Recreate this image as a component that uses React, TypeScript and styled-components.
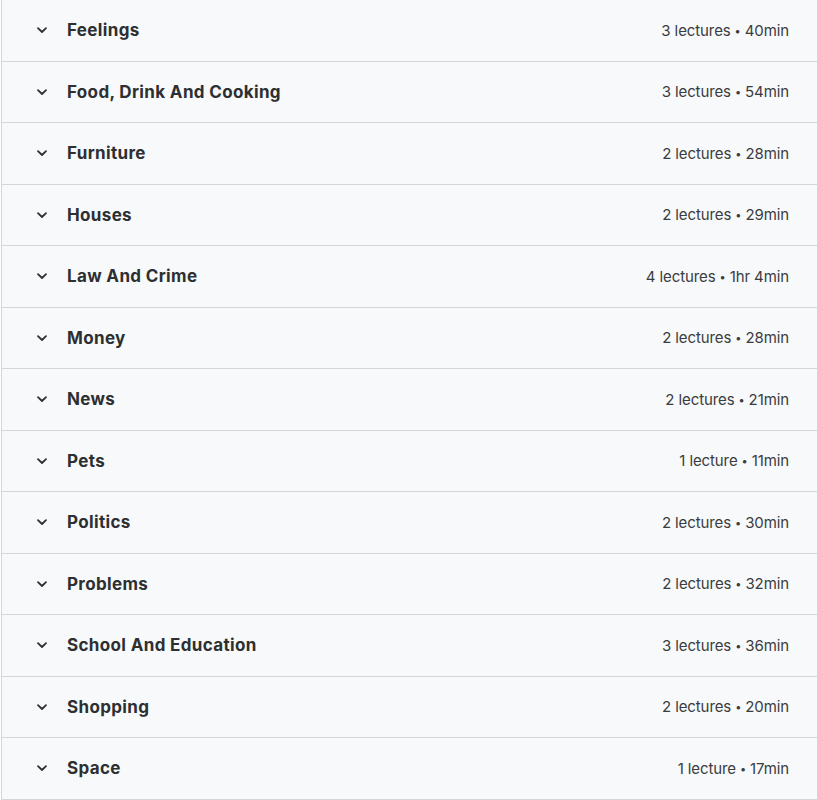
import styled, { createGlobalStyle } from "styled-components";

const GlobalStyle = createGlobalStyle`
  body {
    margin: 0;
    background: #fff;
    font-family: Inter, "Noto Sans", sans-serif;
    color: #2d2f31;
  }
`;

const Curriculum = styled.div`
  margin-left: 1px;
  border-left: 1px solid #d1d7dc;
  background: #f7f9fa;
  overflow: hidden;
  height: 800px;
`;

const Section = styled.div`
  display: flex;
  align-items: center;
  height: 60.5px;
  padding: 0 28px 0 33px;
  border-bottom: 1px solid #d1d7dc;
`;

const Chevron = styled.svg`
  width: 14px;
  height: 14px;
  flex: none;
  margin-right: 18px;
`;

const Title = styled.h3`
  flex: 1;
  margin: 0;
  font-size: 17px;
  font-weight: 700;
  letter-spacing: 0.35px;
  color: #2d2f31;
`;

const Meta = styled.span`
  font-size: 15px;
  color: #3a3c3e;
  letter-spacing: -0.1px;
`;

const Dot = styled.span`
  font-size: 11px;
  margin: 0 4px;
  vertical-align: 1px;
`;

const sections = [
  { title: "Feelings", count: "3 lectures", time: "40min" },
  { title: "Food, Drink And Cooking", count: "3 lectures", time: "54min" },
  { title: "Furniture", count: "2 lectures", time: "28min" },
  { title: "Houses", count: "2 lectures", time: "29min" },
  { title: "Law And Crime", count: "4 lectures", time: "1hr 4min" },
  { title: "Money", count: "2 lectures", time: "28min" },
  { title: "News", count: "2 lectures", time: "21min" },
  { title: "Pets", count: "1 lecture", time: "11min" },
  { title: "Politics", count: "2 lectures", time: "30min" },
  { title: "Problems", count: "2 lectures", time: "32min" },
  { title: "School And Education", count: "3 lectures", time: "36min" },
  { title: "Shopping", count: "2 lectures", time: "20min" },
  { title: "Space", count: "1 lecture", time: "17min" },
];

export default function App() {
  return (
    <>
      <GlobalStyle />
      <Curriculum>
        {sections.map((s) => (
          <Section key={s.title}>
            <Chevron viewBox="0 0 14 14">
              <path
                d="M3 5.2 L7 9 L11 5.2"
                fill="none"
                stroke="#2d2f31"
                strokeWidth="1.8"
                strokeLinecap="round"
                strokeLinejoin="round"
              />
            </Chevron>
            <Title>{s.title}</Title>
            <Meta>
              {s.count}
              <Dot>•</Dot>
              {s.time}
            </Meta>
          </Section>
        ))}
      </Curriculum>
    </>
  );
}
